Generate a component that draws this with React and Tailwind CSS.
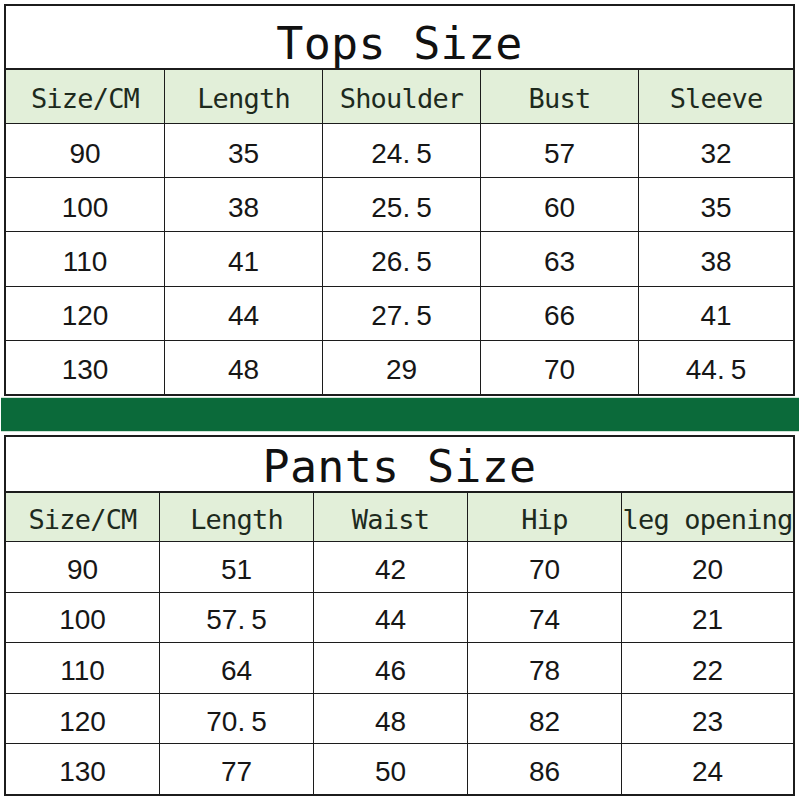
import React from 'react';

const mono = { fontFamily: '"DejaVu Sans Mono", "Liberation Mono", monospace' };

const tops = {
  title: 'Tops Size',
  cols: 'grid-cols-[158px_158px_158px_158px_1fr]',
  head: ['Size/CM', 'Length', 'Shoulder', 'Bust', 'Sleeve'],
  rows: [
    ['90', '35', '24.5', '57', '32'],
    ['100', '38', '25.5', '60', '35'],
    ['110', '41', '26.5', '63', '38'],
    ['120', '44', '27.5', '66', '41'],
    ['130', '48', '29', '70', '44.5'],
  ],
};

const pants = {
  title: 'Pants Size',
  cols: 'grid-cols-[153px_154px_154px_154px_1fr]',
  head: ['Size/CM', 'Length', 'Waist', 'Hip', 'leg opening'],
  rows: [
    ['90', '51', '42', '70', '20'],
    ['100', '57.5', '44', '74', '21'],
    ['110', '64', '46', '78', '22'],
    ['120', '70.5', '48', '82', '23'],
    ['130', '77', '50', '86', '24'],
  ],
};

// "24.5" is set with a wide full-stop, as in the source sheet
function Num({ value }) {
  const [a, b] = value.split('.');
  if (b === undefined) return <span>{value}</span>;
  return (
    <span>
      {a}
      <span className="pr-[6px]">.</span>
      {b}
    </span>
  );
}

function SizeTable({ data, titleH, headH, rowH }) {
  return (
    <div className="border-2 border-[#1c1c1c] bg-white">
      <div
        className="flex items-end justify-center pb-[2px] text-[45px] leading-none text-[#111]"
        style={{ ...mono, height: titleH }}
      >
        <span className="tracking-[0.3px]">{data.title}</span>
      </div>
      <div className={`grid ${data.cols} border-t-2 border-[#1c1c1c] bg-[#e2efd9]`} style={{ height: headH }}>
        {data.head.map((h, i) => (
          <div
            key={h}
            className={`flex items-center justify-center pt-[6px] whitespace-nowrap text-[27px] tracking-[-0.8px] text-[#1d2a1d] ${i > 0 ? 'border-l border-[#1c1c1c]' : ''}`}
            style={mono}
          >
            {h}
          </div>
        ))}
      </div>
      {data.rows.map((r, ri) => (
        <div key={ri} className={`grid ${data.cols} border-t border-[#1c1c1c]`} style={{ height: rowH }}>
          {r.map((v, i) => (
            <div
              key={i}
              className={`flex items-center justify-center pt-[6px] text-[28px] text-[#161616] font-['Liberation_Sans',Arial,sans-serif] ${i > 0 ? 'border-l border-[#1c1c1c]' : ''}`}
            >
              <Num value={v} />
            </div>
          ))}
        </div>
      ))}
    </div>
  );
}

export default function App() {
  return (
    <div className="w-[800px] h-[800px] bg-white overflow-hidden pt-[4px]">
      <div className="ml-[4px] w-[791px]">
        <SizeTable data={tops} titleH={62} headH={55} rowH={54.2} />
      </div>
      <div className="mt-[1px] ml-[1px] w-[798px] h-[35px] bg-[#0b6a3a] border-y border-[#cfe3d5]" />
      <div className="mt-[3px] ml-[4px] w-[791px]">
        <SizeTable data={pants} titleH={54} headH={50} rowH={50.6} />
      </div>
    </div>
  );
}
